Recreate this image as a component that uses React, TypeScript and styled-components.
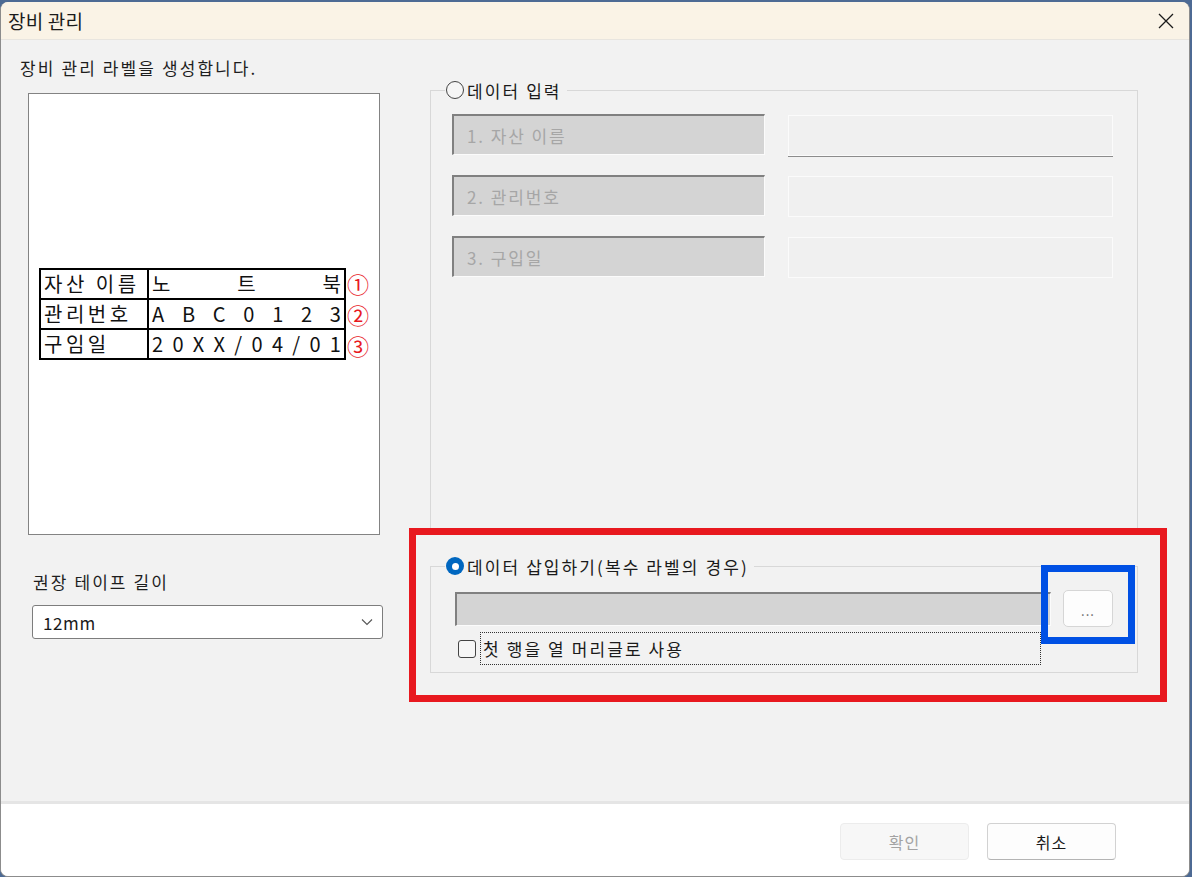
import React from "react";
import styled, { createGlobalStyle } from "styled-components";

const Global = createGlobalStyle`
  html, body { margin: 0; padding: 0; }
  body {
    width: 1192px;
    height: 877px;
    overflow: hidden;
    background: #4d6a94;
    font-family: "Noto Sans CJK KR", "Noto Sans", sans-serif;
    color: #1a1a1a;
  }
  * { box-sizing: border-box; }
`;

const Window = styled.div`
  margin-top: 2px;
  width: 1190px;
  height: 875px;
  display: flex;
  flex-direction: column;
  border: 1px solid #8c8c8c;
  border-top: none;
  border-radius: 8px;
  overflow: hidden;
  background: #f2f2f2;
`;

const TitleBar = styled.div`
  height: 38px;
  flex: none;
  display: flex;
  align-items: center;
  justify-content: space-between;
  padding-left: 7px;
  background: #faf3e6;
  border-bottom: 1px solid #e8e5df;
`;

const TitleText = styled.span`
  font-size: 19px;
  letter-spacing: 0.2px;
  color: #1b1b1b;
`;

const CloseButton = styled.div`
  width: 46px;
  height: 37px;
  display: flex;
  align-items: center;
  justify-content: center;
`;

const Body = styled.div`
  height: 761px;
  flex: none;
  display: flex;
`;

const LeftCol = styled.div`
  width: 408px;
  flex: none;
  display: flex;
  flex-direction: column;
  padding-top: 17px;
`;

const Text = styled.div`
  font-size: 17px;
  line-height: 21px;
  letter-spacing: 2.1px;
  color: #1e1e1e;
  white-space: nowrap;
`;

const IntroText = styled(Text)`
  margin-left: 19px;
`;

const Preview = styled.div`
  margin: 15px 0 0 27px;
  width: 352px;
  height: 442px;
  background: #ffffff;
  border: 1px solid #838383;
  display: flex;
  align-items: center;
  padding-left: 10px;
`;

const LabelWrap = styled.div`
  display: flex;
  align-items: stretch;
`;

const LabelTable = styled.table`
  border-collapse: collapse;
  font-size: 20px;
  color: #111;
`;

const Cell = styled.td<{ $w: number }>`
  border: 2px solid #000;
  height: 30px;
  width: ${(p) => p.$w}px;
  padding: 0 3px;
  line-height: 26px;
  white-space: nowrap;
`;

const HeadText = styled.span`
  letter-spacing: 3.5px;
`;

const Spread = styled.div`
  display: flex;
  justify-content: space-between;
`;

const NumberCol = styled.div`
  display: flex;
  flex-direction: column;
  justify-content: space-around;
  margin-left: 1px;
`;

const Circled = styled.span`
  font-size: 22px;
  line-height: 30px;
  color: #e8191f;
`;

const TapeLabel = styled(Text)`
  margin: 36px 0 0 32px;
`;

const Select = styled.div`
  margin: 13px 0 0 31px;
  width: 351px;
  height: 34px;
  background: #fff;
  border: 1px solid #7d7d7d;
  border-radius: 3px;
  display: flex;
  align-items: center;
  justify-content: space-between;
  padding: 0 9px 0 10px;
  font-size: 17px;
  letter-spacing: 0.6px;
`;

const RightCol = styled.div`
  width: 758px;
  flex: none;
  padding-top: 40px;
  display: flex;
  flex-direction: column;
`;

const GroupBox = styled.fieldset<{ $h: number; $ml?: number; $open?: boolean }>`
  margin: 0 0 0 ${(p) => p.$ml ?? 0}px;
  width: 708px;
  height: ${(p) => p.$h}px;
  padding: 0;
  border: 1px solid #d8d8d8;
  ${(p) => (p.$open ? "border-bottom: none;" : "")}
  min-width: 0;
`;

const Legend = styled.legend`
  margin-left: 14px;
  padding: 0 5px 0 1px;
  height: 20px;
  display: flex;
  align-items: center;
  gap: 3px;
  font-size: 17px;
  letter-spacing: 2.1px;
  white-space: nowrap;
`;

const Radio = styled.span<{ $checked?: boolean }>`
  width: 18px;
  height: 18px;
  border-radius: 50%;
  flex: none;
  display: inline-flex;
  align-items: center;
  justify-content: center;
  border: ${(p) => (p.$checked ? "none" : "1px solid #444")};
  background: ${(p) => (p.$checked ? "#0067c0" : "#f6f6f6")};
  &::after {
    content: "";
    width: ${(p) => (p.$checked ? 7 : 0)}px;
    height: ${(p) => (p.$checked ? 7 : 0)}px;
    border-radius: 50%;
    background: #fff;
  }
`;

const FieldRows = styled.div`
  display: flex;
  flex-direction: column;
  gap: 19px;
  padding: 14px 0 0 21px;
`;

const FieldRow = styled.div`
  display: flex;
  gap: 23px;
`;

const GrayField = styled.div<{ $w: number; $h: number }>`
  width: ${(p) => p.$w}px;
  height: ${(p) => p.$h}px;
  background: #d4d4d4;
  border-style: solid;
  border-width: 2px 1px 1px 2px;
  border-color: #808080 #fbfbfb #fbfbfb #808080;
  display: flex;
  align-items: center;
  padding-left: 13px;
  font-size: 17px;
  letter-spacing: 1.9px;
  color: #a6a6a6;
  white-space: nowrap;
`;

const WhiteField = styled.div<{ $focus?: boolean }>`
  width: 325px;
  height: 41px;
  margin-top: 1px;
  background: #f0f0f0;
  border: 1px solid #fbfbfb;
  ${(p) => (p.$focus ? "box-shadow: 0 1px 0 #8c8c8c;" : "")}
`;

const RedBox = styled.div`
  position: relative;
  width: 758px;
  height: 174px;
  border: 7px solid #e8191f;
  padding: 21px 22px 0 14px;
`;

const BlueBox = styled.div`
  position: absolute;
  left: 625px;
  top: 30px;
  width: 94px;
  height: 79px;
  border: 7px solid #0050e4;
`;

const InsertRow = styled.div`
  display: flex;
  align-items: center;
  padding: 14px 0 0 24px;
  height: 51px;
`;

const EllipsisButton = styled.div`
  margin-left: 12px;
  width: 50px;
  height: 37px;
  background: #fdfdfd;
  border: 1px solid #d6d6d6;
  border-radius: 5px;
  display: flex;
  align-items: flex-end;
  justify-content: center;
  padding-bottom: 9px;
  font-size: 13px;
  line-height: 13px;
  letter-spacing: 1px;
  color: #666;
`;

const CheckRow = styled.div`
  display: flex;
  align-items: center;
  margin: 5px 0 0 27px;
`;

const CheckBox = styled.span`
  width: 18px;
  height: 18px;
  flex: none;
  border: 1px solid #444;
  border-radius: 3px;
  background: #f6f6f6;
`;

const FocusLabel = styled.div`
  margin-left: 4px;
  width: 561px;
  height: 33px;
  border: 1px dotted #333;
  display: flex;
  align-items: center;
  padding-left: 2px;
  font-size: 17px;
  letter-spacing: 2.1px;
  white-space: nowrap;
`;

const Footer = styled.div`
  flex: 1;
  display: flex;
  justify-content: flex-end;
  align-items: flex-start;
  gap: 18px;
  padding: 19px 73px 0 0;
  background: #ffffff;
  border-top: 3px solid #e5e5e5;
`;

const FooterButton = styled.div<{ $disabled?: boolean }>`
  width: 129px;
  height: 37px;
  border-radius: 4px;
  display: flex;
  align-items: center;
  justify-content: center;
  font-size: 16px;
  letter-spacing: 1px;
  background: ${(p) => (p.$disabled ? "#f7f7f7" : "#fdfdfd")};
  border: 1px solid ${(p) => (p.$disabled ? "#ececec" : "#d2d2d2")};
  border-bottom-color: ${(p) => (p.$disabled ? "#ececec" : "#b4b4b4")};
  color: ${(p) => (p.$disabled ? "#a3a3a3" : "#1a1a1a")};
`;

const rows = [
  { head: "자산 이름", value: ["노", "트", "북"], num: "①" },
  { head: "관리번호", value: "ABC0123".split(""), num: "②" },
  { head: "구임일", value: "20XX/04/01".split(""), num: "③" },
];

const fields = ["1. 자산 이름", "2. 관리번호", "3. 구입일"];

export default function App() {
  return (
    <>
      <Global />
      <Window>
        <TitleBar>
          <TitleText>장비 관리</TitleText>
          <CloseButton>
            <svg width="16" height="16" viewBox="0 0 16 16">
              <path d="M1 1 L15 15 M15 1 L1 15" stroke="#1a1a1a" strokeWidth="1.3" fill="none" />
            </svg>
          </CloseButton>
        </TitleBar>
        <Body>
          <LeftCol>
            <IntroText>장비 관리 라벨을 생성합니다.</IntroText>
            <Preview>
              <LabelWrap>
                <LabelTable>
                  <tbody>
                    {rows.map((r) => (
                      <tr key={r.head}>
                        <Cell $w={108}>
                          <HeadText>{r.head}</HeadText>
                        </Cell>
                        <Cell $w={197}>
                          <Spread>
                            {r.value.map((c, i) => (
                              <span key={i}>{c}</span>
                            ))}
                          </Spread>
                        </Cell>
                      </tr>
                    ))}
                  </tbody>
                </LabelTable>
                <NumberCol>
                  {rows.map((r) => (
                    <Circled key={r.num}>{r.num}</Circled>
                  ))}
                </NumberCol>
              </LabelWrap>
            </Preview>
            <TapeLabel>권장 테이프 길이</TapeLabel>
            <Select>
              <span>12mm</span>
              <svg width="12" height="8" viewBox="0 0 12 8">
                <path d="M1 1.5 L6 6.5 L11 1.5" stroke="#555" strokeWidth="1.1" fill="none" />
              </svg>
            </Select>
          </LeftCol>
          <RightCol>
            <GroupBox $h={448} $ml={21} $open>
              <Legend>
                <Radio />
                데이터 입력
              </Legend>
              <FieldRows>
                {fields.map((f, i) => (
                  <FieldRow key={f}>
                    <GrayField $w={313} $h={41}>
                      {f}
                    </GrayField>
                    <WhiteField $focus={i === 0} />
                  </FieldRow>
                ))}
              </FieldRows>
            </GroupBox>
            <RedBox>
              <GroupBox $h={117}>
                <Legend>
                  <Radio $checked />
                  데이터 삽입하기(복수 라벨의 경우)
                </Legend>
                <InsertRow>
                  <GrayField $w={596} $h={34} />
                  <EllipsisButton>...</EllipsisButton>
                </InsertRow>
                <CheckRow>
                  <CheckBox />
                  <FocusLabel>첫 행을 열 머리글로 사용</FocusLabel>
                </CheckRow>
              </GroupBox>
              <BlueBox />
            </RedBox>
          </RightCol>
        </Body>
        <Footer>
          <FooterButton $disabled>확인</FooterButton>
          <FooterButton>취소</FooterButton>
        </Footer>
      </Window>
    </>
  );
}
